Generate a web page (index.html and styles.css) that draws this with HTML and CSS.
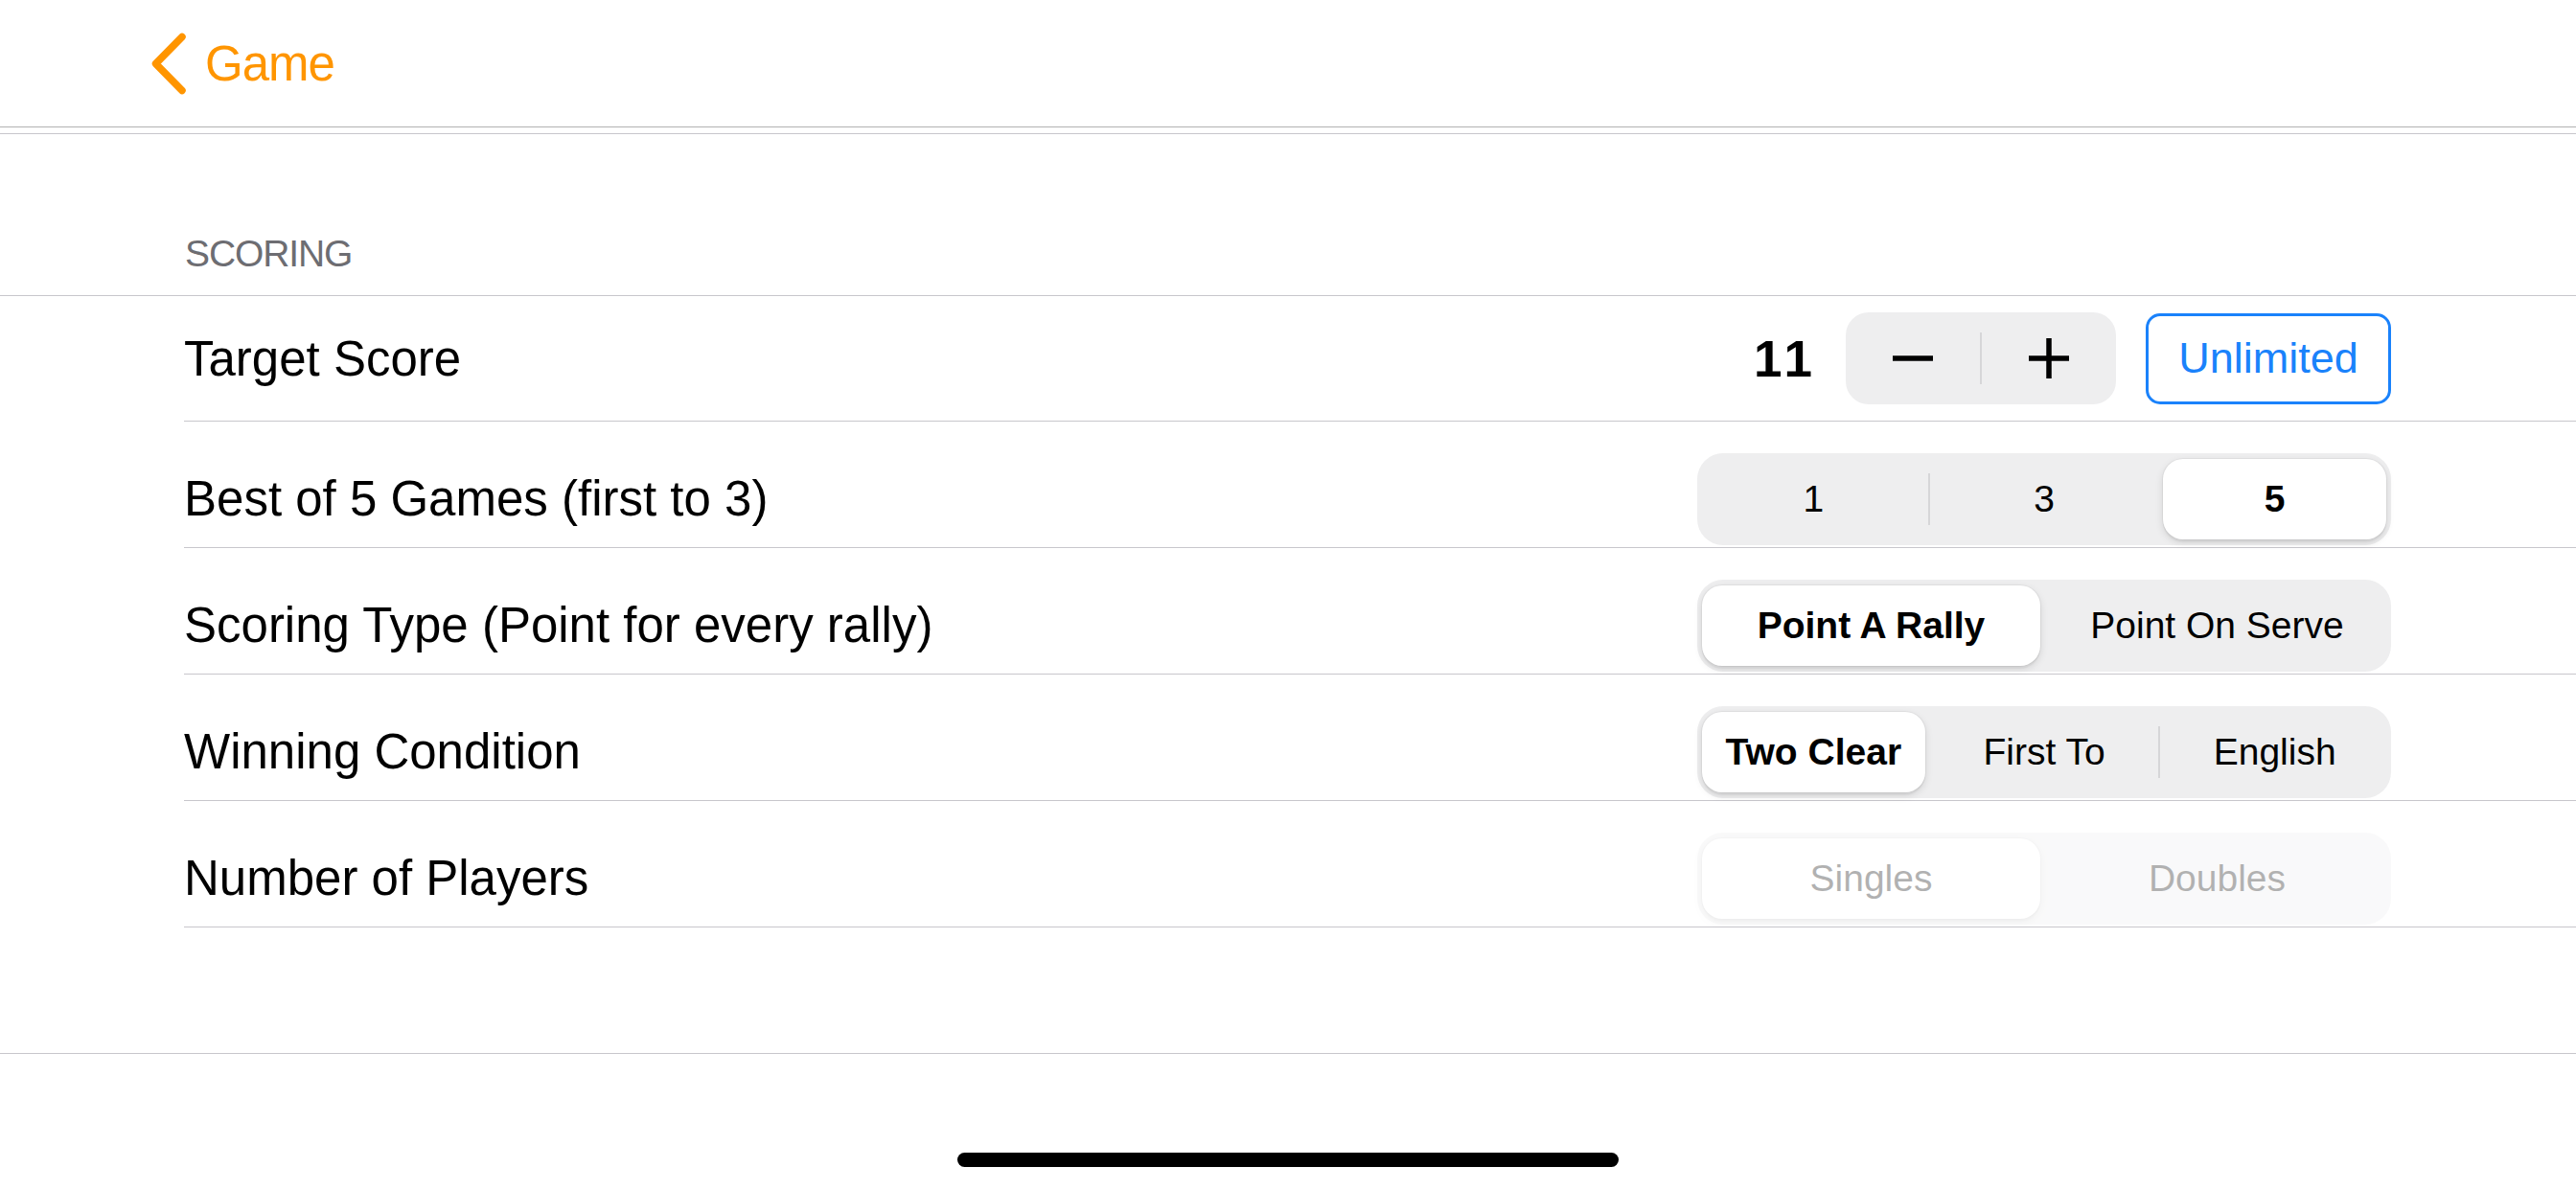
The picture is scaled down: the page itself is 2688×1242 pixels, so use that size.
FILE: index.html
```html
<!DOCTYPE html>
<html lang="en">

<head>
    <meta charset="UTF-8">
    <meta name="viewport" content="width=device-width, initial-scale=1.0">
    <title>Game Settings</title>
    <link rel="stylesheet" href="styles.css">
</head>

<body>
    <header class="navbar">
        <a href="#" class="back-link">
            <svg class="back-chevron" viewBox="0 0 42 72" width="42" height="72">
                <polyline points="35,8.5 7.5,36.5 35,64.5" />
            </svg>
            <span class="back-title">Game</span>
        </a>
    </header>

    <main class="settings">
        <div class="section-header">SCORING</div>

        <div class="row row-first">
            <span class="row-label">Target Score</span>
            <div class="row-controls">
                <span class="score-value">11</span>
                <div class="stepper">
                    <button class="stepper-btn">
                        <svg width="42" height="6" viewBox="0 0 42 6"><line x1="0" y1="3" x2="42" y2="3" /></svg>
                    </button>
                    <span class="stepper-divider"></span>
                    <button class="stepper-btn">
                        <svg width="42" height="42" viewBox="0 0 42 42"><line x1="0" y1="21" x2="42" y2="21" /><line x1="21" y1="0" x2="21" y2="42" /></svg>
                    </button>
                </div>
                <button class="outline-btn">Unlimited</button>
            </div>
        </div>

        <div class="row">
            <span class="row-label">Best of 5 Games (first to 3)</span>
            <div class="segmented">
                <button class="segment">1</button>
                <i class="seg-sep"></i>
                <button class="segment">3</button>
                <i class="seg-sep hidden"></i>
                <button class="segment selected">5</button>
            </div>
        </div>

        <div class="row">
            <span class="row-label">Scoring Type (Point for every rally)</span>
            <div class="segmented">
                <button class="segment selected">Point A Rally</button>
                <i class="seg-sep hidden"></i>
                <button class="segment">Point On Serve</button>
            </div>
        </div>

        <div class="row">
            <span class="row-label">Winning Condition</span>
            <div class="segmented">
                <button class="segment selected">Two Clear</button>
                <i class="seg-sep hidden"></i>
                <button class="segment">First To</button>
                <i class="seg-sep"></i>
                <button class="segment">English</button>
            </div>
        </div>

        <div class="row">
            <span class="row-label">Number of Players</span>
            <div class="segmented disabled">
                <button class="segment selected">Singles</button>
                <i class="seg-sep hidden"></i>
                <button class="segment">Doubles</button>
            </div>
        </div>

        <div class="settings-footer"></div>
    </main>

    <div class="home-bar"></div>
</body>

</html>
```

FILE: styles.css
```css
* {
    margin: 0;
    padding: 0;
    box-sizing: border-box;
}

body {
    font-family: 'Liberation Sans', Arial, sans-serif;
    color: #000;
    background-color: #fff;
    overflow: hidden;
}

button {
    font-family: inherit;
    color: inherit;
    border: none;
    background: none;
    cursor: pointer;
}

.navbar {
    height: 133px;
    padding-left: 155px;
    display: flex;
    align-items: center;
    border-bottom: 1px solid #b2b2b2;
}

.back-link {
    display: flex;
    align-items: center;
    color: #ff9500;
    text-decoration: none;
}

.back-chevron polyline {
    fill: none;
    stroke: #ff9500;
    stroke-width: 7.5;
    stroke-linecap: round;
    stroke-linejoin: round;
}

.back-title {
    margin-left: 17px;
    font-size: 51px;
    letter-spacing: -1px;
}

.settings {
    margin-top: 6px;
    border-top: 1px solid #c8c7cc;
}

.section-header {
    height: 169px;
    padding: 0 0 20px 193px;
    display: flex;
    align-items: flex-end;
    font-size: 39px;
    line-height: 46px;
    letter-spacing: -1.1px;
    color: #6d6d72;
    border-bottom: 1px solid #c8c7cc;
}

.row {
    height: 132px;
    margin-left: 192px;
    padding: 30px 193px 0 0;
    display: flex;
    align-items: center;
    justify-content: space-between;
    border-bottom: 1px solid #c8c7cc;
}

.row-first {
    height: 131px;
    padding-top: 0;
}

.row-label {
    font-size: 51px;
}

.row-controls {
    display: flex;
    align-items: center;
}

.score-value {
    font-size: 53px;
    font-weight: bold;
    letter-spacing: 5px;
    margin-right: 30px;
}

/* stepper */
.stepper {
    width: 282px;
    height: 96px;
    display: flex;
    align-items: center;
    background-color: #eeeeef;
    border-radius: 24px;
    margin-right: 31px;
}

.stepper-btn {
    flex: 1;
    height: 100%;
    display: flex;
    align-items: center;
    justify-content: center;
}

.stepper-btn line {
    stroke: #000;
    stroke-width: 5.5;
}

.stepper-divider {
    width: 2px;
    height: 54px;
    background-color: #d6d6d8;
}

.outline-btn {
    width: 256px;
    height: 95px;
    border: 3px solid #1a82fb;
    border-radius: 15px;
    font-size: 45px;
    color: #1a82fb;
    background-color: #fff;
}

/* segmented controls */
.segmented {
    width: 724px;
    height: 96px;
    padding: 6px 5px;
    display: flex;
    align-items: center;
    background-color: #eeeeef;
    border-radius: 27px;
}

.segment {
    flex: 1;
    height: 84px;
    font-size: 39px;
    border-radius: 21px;
}

.segment.selected {
    background-color: #fff;
    font-weight: bold;
    box-shadow: 0 0 0 1px rgba(0, 0, 0, 0.04), 0 3px 8px rgba(0, 0, 0, 0.12), 0 3px 1px rgba(0, 0, 0, 0.04);
}

.seg-sep {
    flex: none;
    width: 2px;
    height: 54px;
    margin: 0 3px;
    background-color: #d6d6d8;
}

.seg-sep.hidden {
    background-color: transparent;
}

.segmented.disabled {
    opacity: 0.3;
}

.segmented.disabled .segment.selected {
    font-weight: normal;
}

.settings-footer {
    height: 132px;
    border-bottom: 1px solid #c8c7cc;
}

.home-bar {
    width: 690px;
    height: 15px;
    margin: 103px auto 0;
    background-color: #000;
    border-radius: 8px;
}
```
